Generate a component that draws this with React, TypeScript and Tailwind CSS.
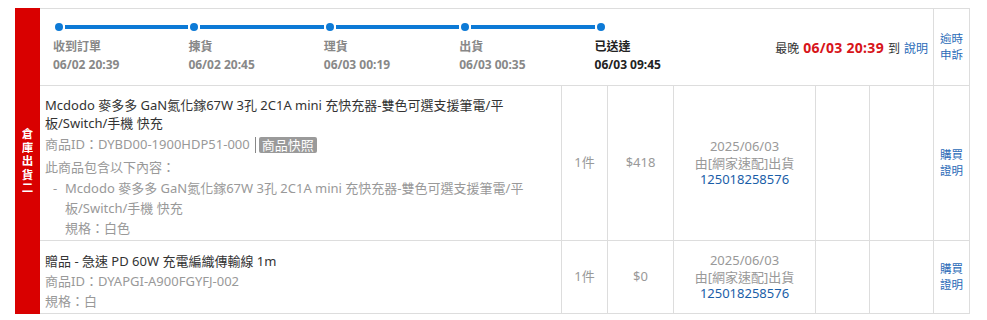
import React from 'react';

interface Step {
  label: string;
  time: string;
  done?: boolean;
}

const steps: Step[] = [
  { label: '收到訂單', time: '06/02 20:39' },
  { label: '揀貨', time: '06/02 20:45' },
  { label: '理貨', time: '06/03 00:19' },
  { label: '出貨', time: '06/03 00:35' },
  { label: '已送達', time: '06/03 09:45', done: true },
];

const TwoLine: React.FC<{ a: string; b: string }> = ({ a, b }) => (
  <div className="text-center text-[11.5px] leading-[16px] text-[#2a6bb8]">
    {a}
    <br />
    {b}
  </div>
);

const ShipInfo: React.FC = () => (
  <div className="flex flex-col items-center text-[13px] leading-[16.5px]">
    <span className="text-[#999]">2025/06/03</span>
    <span className="text-[#999]">由[網家速配]出貨</span>
    <span className="text-[#1a5ea8]">125018258576</span>
  </div>
);

const SideCells: React.FC<{ qty: string; price: string }> = ({ qty, price }) => (
  <>
    <div className="border-l border-[#ddd] flex items-center justify-center text-[13px] text-[#999]">{qty}</div>
    <div className="border-l border-[#ddd] flex items-center justify-center text-[13px] text-[#999]">{price}</div>
    <div className="border-l border-[#ddd] flex items-center justify-center">
      <ShipInfo />
    </div>
    <div className="border-l border-[#ddd]" />
    <div className="border-l border-[#ddd]" />
    <div className="border-l border-[#ddd] flex items-center justify-center">
      <TwoLine a="購買" b="證明" />
    </div>
  </>
);

export default function App() {
  return (
    <div className="w-[987px] h-[320px] bg-white pl-[15px] pt-[8px] font-['Noto_Sans','Noto_Sans_CJK_TC',sans-serif]">
      <div className="flex">
        <div className="w-[25px] bg-[#d90000] flex flex-col items-center justify-center text-white text-[11.5px] font-bold">
          {['倉', '庫', '出', '貨', '二'].map((c) => (
            <div key={c} className="h-[13.5px] leading-[13.5px] overflow-hidden">{c}</div>
          ))}
        </div>

        <div className="w-[930px] border-t border-r border-[#ddd]">
          {/* header: progress */}
          <div className="flex h-[77px] border-b border-[#ddd]">
            <div className="flex-1 flex justify-between items-center pl-[13px] pr-[5px]">
              <div className="flex self-start pt-[14px]">
                {steps.map((s, i) => (
                  <div key={s.label} className="w-[135.4px] flex flex-col">
                    <div className="flex items-center h-[8px]">
                      <div className="ml-[2px] w-[8px] h-[8px] rounded-full bg-[#0d7ad6]" />
                      {i < steps.length - 1 && <div className="ml-[2px] flex-1 h-[4px] bg-[#0d7ad6]" />}
                    </div>
                    <div className={`mt-[7px] text-[12px] font-bold leading-[18px] ${s.done ? 'text-[#222]' : 'text-[#888]'}`}>
                      <div>{s.label}</div>
                      <div>{s.time}</div>
                    </div>
                  </div>
                ))}
              </div>
              <div className="flex items-baseline gap-[4px] text-[12px] text-[#333]">
                <span>最晚</span>
                <span className="text-[14px] font-bold text-[#d7141a] tracking-[0.3px]">06/03 20:39</span>
                <span>到</span>
                <span className="text-[#2a6bb8]">說明</span>
              </div>
            </div>
            <div className="w-[36px] border-l border-[#ddd] flex items-center justify-center">
              <TwoLine a="逾時" b="申訴" />
            </div>
          </div>

          {/* row 1 */}
          <div className="grid grid-cols-[521px_46px_66px_142px_54px_64px_36px] h-[155px] border-b border-[#ddd]">
            <div className="pl-[5px] pt-[10px] text-[13px]">
              <div className="leading-[18px] text-[#333]">
                Mcdodo 麥多多 GaN氮化鎵67W 3孔 2C1A mini 充快充器-雙色可選支援筆電/平
                <br />
                板/Switch/手機 快充
              </div>
              <div className="mt-[2px] h-[22px] flex items-center text-[#999]">
                <span>商品ID：DYBD00-1900HDP51-000</span>
                <span className="ml-[5px] w-px h-[16px] bg-[#888]" />
                <span className="ml-[3px] px-[3px] h-[16px] leading-[16px] bg-[#9a9a9a] text-white rounded-[2px]">商品快照</span>
              </div>
              <div className="leading-[22px] text-[#999]">此商品包含以下內容：</div>
              <div className="flex text-[#999] leading-[20px]">
                <span className="ml-[8px] w-[12px]">-</span>
                <div>
                  Mcdodo 麥多多 GaN氮化鎵67W 3孔 2C1A mini 充快充器-雙色可選支援筆電/平
                  <br />
                  板/Switch/手機 快充
                  <br />
                  規格：白色
                </div>
              </div>
            </div>
            <SideCells qty="1件" price="$418" />
          </div>

          {/* row 2 */}
          <div className="grid grid-cols-[521px_46px_66px_142px_54px_64px_36px] h-[73px] border-b border-[#ddd]">
            <div className="pl-[5px] pt-[10px] text-[13px] leading-[20px]">
              <div className="text-[#333]">贈品 - 急速 PD 60W 充電編織傳輸線 1m</div>
              <div className="text-[#999]">商品ID：DYAPGI-A900FGYFJ-002</div>
              <div className="text-[#999]">規格：白</div>
            </div>
            <SideCells qty="1件" price="$0" />
          </div>
        </div>
      </div>
    </div>
  );
}
